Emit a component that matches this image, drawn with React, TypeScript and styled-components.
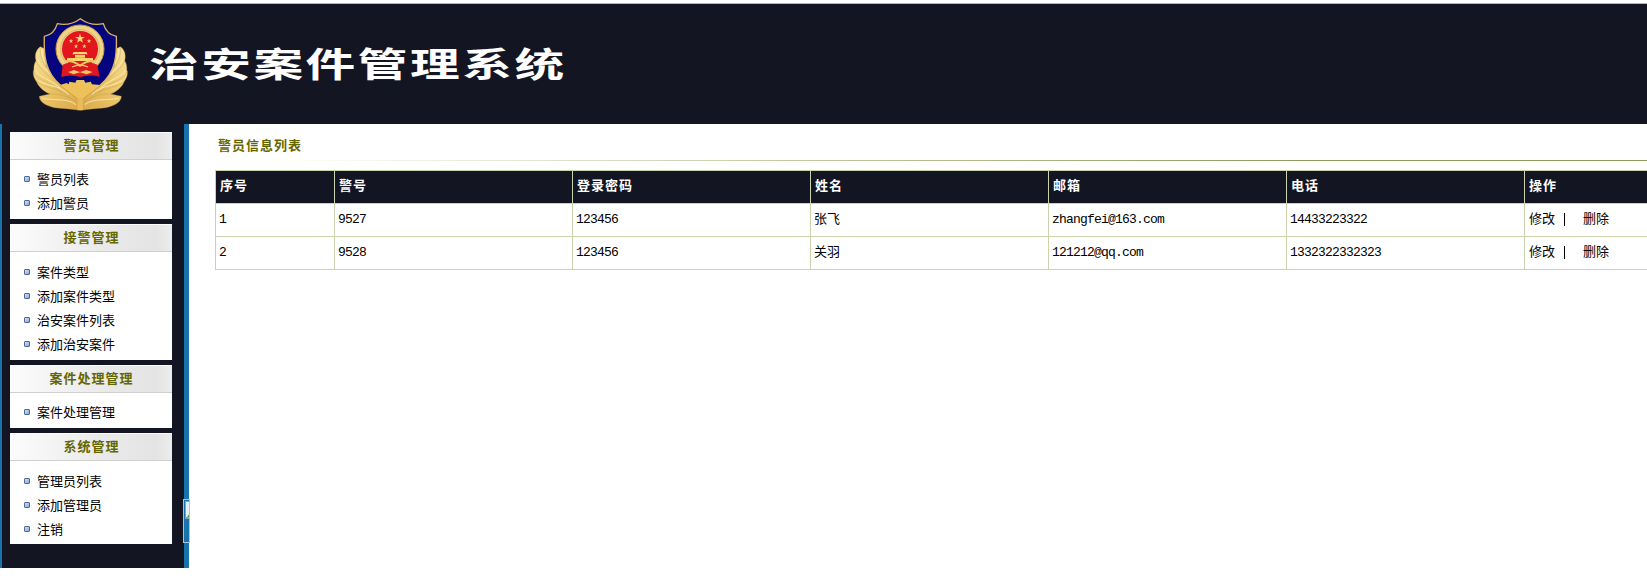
import React from "react";
import styled, { createGlobalStyle } from "styled-components";

const Global = createGlobalStyle`
  body { margin: 0; background: #fff; overflow: hidden; }
  * { box-sizing: border-box; }
`;

const Page = styled.div`
  width: 100%;
  height: 579px;
  overflow: hidden;
  padding-top: 3px;
  color: #000;
  font: 13px/24px "Liberation Mono", "Noto Sans CJK SC", monospace;
`;

const Header = styled.header`
  height: 121px;
  border-top: 1px solid #b4b4ba;
  background: #131523;
  display: flex;
  padding-left: 30px;
`;

const Logo = styled.svg`
  display: block;
  width: 100px;
  height: 98px;
  margin-top: 11px;
  flex: none;
`;

const SystemName = styled.h1`
  margin: 33px 0 0 19px;
  font: 700 35px/52px "Noto Sans CJK SC", sans-serif;
  letter-spacing: 1.76px;
  color: #fff;
  white-space: nowrap;
  transform: scale(1.42, 0.97);
  transform-origin: left top;
`;

const Body = styled.div`
  display: flex;
  align-items: flex-start;
`;

const Sidebar = styled.aside`
  position: relative;
  width: 189px;
  height: 444px;
  flex: none;
  background: #131523;
  border-left: 2px solid #1873ad;
  border-right: 5px solid #1873ad;
  padding: 8px 0 0 8px;
  display: flex;
  flex-direction: column;
  gap: 5px;
`;

const MenuBox = styled.section<{ $height: number }>`
  width: 162px;
  height: ${(p) => p.$height}px;
  background: #fff;
`;

const MenuTitle = styled.h2`
  margin: 0;
  height: 28px;
  padding-left: 1px;
  border-bottom: 1px solid #d0d0d0;
  background: linear-gradient(90deg, #fcfcfc 0, #e9e9e9 60%, #e4e4e4 90%, #ececec 100%);
  box-shadow: inset 0 1px 0 #fafafa;
  color: #666600;
  font: 700 13px/25px "Noto Sans CJK SC", sans-serif;
  letter-spacing: 1px;
  text-align: center;
`;

const MenuList = styled.ul<{ $top: number }>`
  margin: 0;
  padding: ${(p) => p.$top}px 0 0 14px;
  list-style: none;
`;

const MenuItem = styled.li`
  display: flex;
  align-items: center;
  gap: 7px;
  height: 24px;
  font: 13px/24px "Noto Sans CJK SC", sans-serif;
`;

const Bullet = styled.i`
  width: 6px;
  height: 6px;
  border: 1px solid #51698f;
  border-radius: 1px;
  background: linear-gradient(135deg, #d3e2f8, #82a4dc);
`;

const Handle = styled.div`
  position: absolute;
  left: 181px;
  top: 375px;
  width: 7px;
  height: 44px;
  border: 1px solid #a9c6da;
  overflow: hidden;
`;

const Main = styled.main`
  flex: 1;
  min-width: 0;
  padding-left: 26px;
`;

const ListTitle = styled.h2`
  margin: 0;
  height: 37px;
  padding: 8px 0 0 3px;
  color: #666600;
  font: 700 13px/25px "Noto Sans CJK SC", sans-serif;
  letter-spacing: 1px;
`;

const Rule = styled.div`
  height: 1px;
  margin-bottom: 9px;
  margin-top: -1px;
  background: linear-gradient(90deg, #fff 5%, #c3c9a4 40%, #8c9d5c 75%, #8c9d5c);
`;

const Table = styled.div`
  border: 1px solid #ccd2ae;
  border-right: 0;
  width: 1460px;
`;

const Row = styled.div<{ $head?: boolean }>`
  display: grid;
  grid-template-columns: 119px repeat(5, 238px) 1fr;
  height: 33px;
  background: ${(p) => (p.$head ? "#131523" : "#fff")};
  color: ${(p) => (p.$head ? "#fff" : "#000")};
  border-bottom: 1px solid #ccd2ae;
  &:last-child { border-bottom: 0; height: 32px; }
`;

const Cell = styled.div<{ $kind?: "head" | "han" }>`
  padding-left: 3px;
  line-height: 31px;
  letter-spacing: -0.8px;
  white-space: pre;
  border-right: 1px solid #ccd2ae;
  ${(p) => p.$kind === "head" && "font-weight: 700; letter-spacing: 1px; padding-left: 4px;"}
  ${(p) => p.$kind === "han" && `font-family: "Noto Sans CJK SC", sans-serif; letter-spacing: 0; line-height: 28px;`}
  &:last-child { border-right: 0; padding-left: 4px; }
`;

const Actions = styled.span`
  display: flex;
`;

const Divider = styled.i`
  width: 1px;
  height: 13px;
  margin: 9px 18px 0 9px;
  background: #000;
`;

const menus = [
  { title: "警员管理", height: 87, top: 7, items: ["警员列表", "添加警员"] },
  { title: "接警管理", height: 136, top: 8, items: ["案件类型", "添加案件类型", "治安案件列表", "添加治安案件"] },
  { title: "案件处理管理", height: 63, top: 7, items: ["案件处理管理"] },
  { title: "系统管理", height: 111, top: 8, items: ["管理员列表", "添加管理员", "注销"] },
];

const columns = ["序号", "警号", "登录密码", "姓名", "邮箱", "电话", "操作"];

const officers = [
  { id: "1", no: "9527", pwd: "123456", name: "张飞", mail: "zhangfei@163.com", tel: "14433223322" },
  { id: "2", no: "9528", pwd: "123456", name: "关羽", mail: "121212@qq.com", tel: "1332322332323" },
];

const star = (cx: number, cy: number, r: number) =>
  Array.from({ length: 10 }, (_, i) => {
    const a = (Math.PI / 5) * i - Math.PI / 2;
    const k = i % 2 ? r * 0.4 : r;
    return `${cx + k * Math.cos(a)},${cy + k * Math.sin(a)}`;
  }).join(" ");

function Leaves() {
  return (
    <g fill="url(#gold)" stroke="#bd8f3d" strokeWidth="1">
      <path d="M121 140 C106 150 104 168 108 182 C98 198 104 210 100 214 C98 228 106 240 110 246 C116 262 134 276 150 282 L118 289 C118 310 150 326 198 326 L241 331 V270 L140 200 L134 146Z" />
      <path fill="none" d="M108 182 C114 206 146 222 160 244 M100 212 C108 244 150 240 186 280 M110 246 C140 268 180 262 212 296 M150 282 C176 280 206 288 230 306 M121 140 C118 160 126 186 142 206" />
      <path fill="none" stroke="#fbeebb" strokeWidth="2.5" d="M114 178 C120 200 146 214 160 232 M106 210 C118 234 150 236 180 264 M116 242 C146 260 180 256 206 284 M126 294 C160 304 200 292 228 314 M126 148 C124 166 132 186 142 196" />
    </g>
  );
}

function Emblem() {
  return (
    <Logo viewBox="90 45 300 294">
      <defs>
        <linearGradient id="gold" x1="0" y1="0" x2="1" y2="1">
          <stop offset="0" stopColor="#f7e3a0" />
          <stop offset="0.5" stopColor="#ebc568" />
          <stop offset="1" stopColor="#dba94a" />
        </linearGradient>
      </defs>
      <Leaves />
      <g transform="matrix(-1 0 0 1 482 0)"><Leaves /></g>
      <path d="M241 56 C222 70 196 76 172 71 C166 92 152 106 133 109 C131 164 134 216 182 256 L241 296 L300 256 C348 216 351 164 349 109 C330 106 316 92 310 71 C286 76 260 70 241 56Z" fill="#04057e" stroke="#d9b36c" strokeWidth="4" />
      <path d="M180 255 L200 249 L206 253 L208 245 L226 248 L230 240 L252 240 L256 248 L272 245 L276 253 L302 255 L241 302Z" fill="#eec15b" />
      <path d="M180 256 L232 296 V330 H250 V296 L302 256" fill="none" stroke="#b98835" strokeWidth="1.5" />
      <path d="M232 294 H250 V330 H232Z" fill="#e8bc5a" />
      <circle cx="240" cy="147" r="72" fill="#efd388" stroke="#c89a46" strokeWidth="3" />
      <circle cx="240" cy="147" r="58" fill="none" stroke="#d5a64f" strokeWidth="2" />
      <circle cx="240" cy="147" r="54" fill="#e3151d" />
      <g fill="#f8d86d">
        <polygon points={star(240, 116, 15)} />
        <polygon points={star(213, 123, 7)} />
        <polygon points={star(267, 123, 7)} />
        <polygon points={star(228, 139, 7)} />
        <polygon points={star(253, 139, 7)} />
        <path d="M221 156 H259 L263 163 H217Z M225 165 H255 V173 H225Z M201 174 H279 V183 H201Z" />
      </g>
      <path d="M188 194 Q210 182 240 194 Q270 182 292 194 L299 230 Q270 222 241 231 Q210 222 184 231Z" fill="#df1720" />
      <path d="M192 184 Q217 180 240 197 Q263 180 288 184" fill="none" stroke="#f1c764" strokeWidth="6" />
      <path d="M204 216 L222 210 L240 216 L258 210 L278 216 L260 223 L240 217 L220 223Z" fill="#f1c764" />
      <path d="M216 201 Q240 190 264 201" fill="none" stroke="#f2ca6d" strokeWidth="4" />
    </Logo>
  );
}

export default function App() {
  return (
    <Page>
      <Global />
      <Header>
        <Emblem />
        <SystemName>治安案件管理系统</SystemName>
      </Header>
      <Body>
        <Sidebar>
          {menus.map((m) => (
            <MenuBox key={m.title} $height={m.height}>
              <MenuTitle>{m.title}</MenuTitle>
              <MenuList $top={m.top}>
                {m.items.map((t) => (
                  <MenuItem key={t}><Bullet />{t}</MenuItem>
                ))}
              </MenuList>
            </MenuBox>
          ))}
          <Handle>
            <svg width="6" height="20" viewBox="0 0 6 20">
              <path d="M1 1H6V19H1Z" fill="#8ba0b4" />
              <path d="M2 2H6V17H2Z" fill="#e6f0fa" />
              <path d="M3 17L6 13V17Z" fill="#58a83c" />
            </svg>
          </Handle>
        </Sidebar>
        <Main>
          <ListTitle>警员信息列表</ListTitle>
          <Rule />
          <Table>
            <Row $head>
              {columns.map((c) => <Cell $kind="head" key={c}>{c}</Cell>)}
            </Row>
            {officers.map((o) => (
              <Row key={o.id}>
                <Cell>{o.id}</Cell>
                <Cell>{o.no}</Cell>
                <Cell>{o.pwd}</Cell>
                <Cell $kind="han">{o.name}</Cell>
                <Cell>{o.mail}</Cell>
                <Cell>{o.tel}</Cell>
                <Cell $kind="han"><Actions>修改<Divider />删除</Actions></Cell>
              </Row>
            ))}
          </Table>
        </Main>
      </Body>
    </Page>
  );
}
